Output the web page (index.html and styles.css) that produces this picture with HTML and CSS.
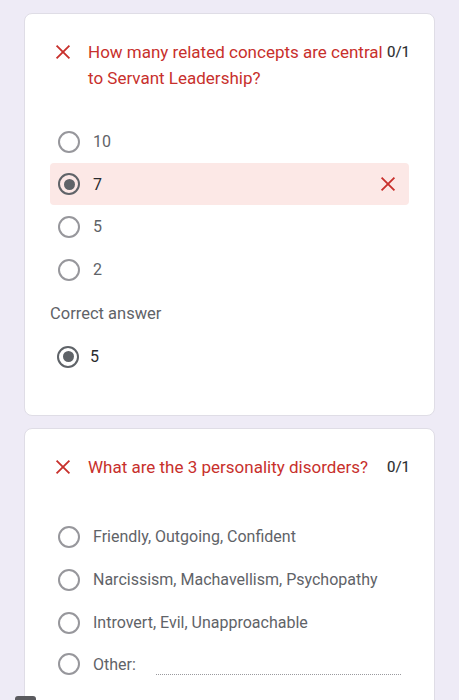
FILE: index.html
```html
<!DOCTYPE html>
<html lang="en">
<head>
    <meta charset="UTF-8">
    <meta name="viewport" content="width=device-width, initial-scale=1.0">
    <title>Quiz Results</title>
    <link rel="stylesheet" href="styles.css">
</head>
<body>
    <div class="page">
        <div class="card">
            <div class="question">
                <svg class="mark" viewBox="0 0 24 24"><path d="M5 5L19 19M19 5L5 19"/></svg>
                <div class="q-text">How many related concepts are central to Servant Leadership?</div>
                <div class="score">0/1</div>
            </div>
            <div class="options first">
                <div class="option"><span class="radio"></span><span class="label">10</span></div>
                <div class="option wrong"><span class="radio checked"></span><span class="label">7</span>
                    <svg class="mark right" viewBox="0 0 24 24"><path d="M5 5L19 19M19 5L5 19"/></svg>
                </div>
                <div class="option"><span class="radio"></span><span class="label">5</span></div>
                <div class="option"><span class="radio"></span><span class="label">2</span></div>
            </div>
            <div class="correct-title">Correct answer</div>
            <div class="option correct"><span class="radio checked"></span><span class="label">5</span></div>
        </div>

        <div class="card">
            <div class="question">
                <svg class="mark" viewBox="0 0 24 24"><path d="M5 5L19 19M19 5L5 19"/></svg>
                <div class="q-text">What are the 3 personality disorders?</div>
                <div class="score">0/1</div>
            </div>
            <div class="options second">
                <div class="option"><span class="radio"></span><span class="label">Friendly, Outgoing, Confident</span></div>
                <div class="option"><span class="radio"></span><span class="label">Narcissism, Machavellism, Psychopathy</span></div>
                <div class="option"><span class="radio"></span><span class="label">Introvert, Evil, Unapproachable</span></div>
                <div class="option other"><span class="radio"></span><span class="label">Other:</span><span class="blank"></span></div>
            </div>
        </div>
    </div>
    <div class="corner-tab"></div>
</body>
</html>
```

FILE: styles.css
```css
body {
    margin: 0;
    background-color: #eeebf6;
    font-family: Roboto, 'Liberation Sans', sans-serif;
    color: #202124;
}
.page {
    padding: 13px 24px 0 24px;
    display: flex;
    flex-direction: column;
    gap: 13px;
}
.card {
    background-color: #fff;
    border: 1px solid #dfdde6;
    border-radius: 8px;
    padding: 25px 25px 37px 25px;
}
.card + .card {
    margin-top: -1px;
}
.question {
    display: flex;
    align-items: flex-start;
}
.mark {
    width: 22px;
    height: 22px;
    flex: none;
    margin: 2px 14px 0 2px;
    stroke: #c8302c;
    stroke-width: 2;
    fill: none;
}
.q-text {
    flex: 1;
    font-size: 17px;
    line-height: 26px;
    color: #c8302c;
}
.score {
    width: 22px;
    font-size: 15px;
    line-height: 26px;
    color: #2a2b2e;
    margin-left: 3px;
    -webkit-text-stroke: 0.15px #2a2b2e;
}
.options.first {
    margin-top: 29px;
}
.options.second {
    margin-top: 35px;
}
.option {
    display: flex;
    align-items: center;
    height: 43px;
    padding-left: 8px;
    border-radius: 4px;
}
.option.wrong {
    background-color: #fce8e6;
    height: 42px;
}
.mark.right {
    margin: 0 10px 0 auto;
}
.radio {
    width: 18px;
    height: 18px;
    border: 2px solid #97979c;
    border-radius: 50%;
    flex: none;
    display: flex;
    align-items: center;
    justify-content: center;
}
.radio.checked {
    border-color: #5f6368;
}
.radio.checked::after {
    content: "";
    width: 11px;
    height: 11px;
    border-radius: 50%;
    background-color: #5f6368;
}
.label {
    margin-left: 13px;
    font-size: 16px;
    color: #5f6368;
}
.option.wrong .label,
.option.correct .label {
    color: #2a2b2e;
}
.correct-title {
    margin-top: 10px;
    font-size: 16.5px;
    color: #5f6368;
    line-height: 26px;
}
.option.correct {
    margin-top: 8px;
    padding-left: 7px;
}
.option.correct .label {
    margin-left: 11px;
}
.option.other {
    height: 40px;
}
.blank {
    flex: 1;
    margin: 20px 8px 0 20px;
    border-bottom: 1px dotted #9a9a9e;
}
.corner-tab {
    position: fixed;
    left: 15px;
    bottom: 0;
    width: 21px;
    height: 4px;
    background-color: #5a5a5e;
    border-radius: 3px 3px 0 0;
}
```
